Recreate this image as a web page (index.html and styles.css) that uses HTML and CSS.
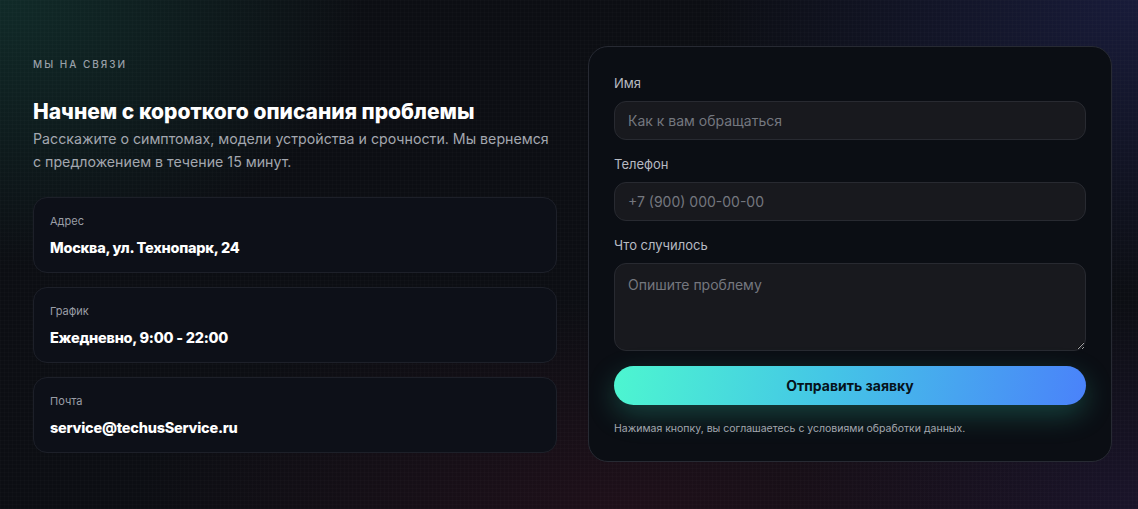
FILE: index.html
```
<!DOCTYPE html>
<html lang="ru">
<head>
<meta charset="utf-8">
<title>Контакты</title>
<link rel="stylesheet" href="styles.css">
</head>
<body>
<section class="contact">
  <div class="info">
    <div class="eyebrow">МЫ НА СВЯЗИ</div>
    <h2 class="title">Начнем с короткого описания проблемы</h2>
    <p class="lead">Расскажите о симптомах, модели устройства и срочности. Мы вернемся с предложением в течение 15 минут.</p>
    <div class="cards">
      <div class="card">
        <div class="card-label">Адрес</div>
        <div class="card-value">Москва, ул. Технопарк, 24</div>
      </div>
      <div class="card">
        <div class="card-label">График</div>
        <div class="card-value">Ежедневно, 9:00 - 22:00</div>
      </div>
      <div class="card">
        <div class="card-label">Почта</div>
        <div class="card-value">service@techusService.ru</div>
      </div>
    </div>
  </div>
  <form class="form">
    <label class="field">
      <span class="field-label">Имя</span>
      <input class="input" type="text" placeholder="Как к вам обращаться">
    </label>
    <label class="field">
      <span class="field-label">Телефон</span>
      <input class="input" type="tel" placeholder="+7 (900) 000-00-00">
    </label>
    <label class="field">
      <span class="field-label">Что случилось</span>
      <textarea class="input textarea" placeholder="Опишите проблему"></textarea>
    </label>
    <button class="submit" type="button">Отправить заявку</button>
    <p class="note">Нажимая кнопку, вы соглашаетесь с условиями обработки данных.</p>
  </form>
</section>
</body>
</html>
```
FILE: styles.css
```
* { box-sizing: border-box; }
html, body { height: 100%; }
body {
  margin: 0;
  font-family: Inter, "Noto Sans", sans-serif;
  color: #f3f4f6;
  background-color: #0c0e13;
  background-image:
    linear-gradient(rgba(255,255,255,0.012) 1px, transparent 1px),
    linear-gradient(90deg, rgba(255,255,255,0.012) 1px, transparent 1px),
    radial-gradient(ellipse 520px 380px at 0% 0%, rgba(20,66,58,0.55), transparent 70%),
    radial-gradient(ellipse 620px 420px at 100% 0%, rgba(36,40,96,0.5), transparent 70%),
    radial-gradient(ellipse 700px 300px at 55% 100%, rgba(70,20,40,0.32), transparent 70%),
    radial-gradient(ellipse 500px 300px at 100% 100%, rgba(50,30,80,0.38), transparent 70%);
  background-size: 4px 4px, 4px 4px, auto, auto, auto, auto;
}
.contact {
  display: grid;
  grid-template-columns: 524px 524px;
  column-gap: 31px;
  padding: 46px 0 0 33px;
  align-items: start;
}
.info { padding-top: 11px; }
.eyebrow {
  font-size: 10px;
  letter-spacing: 2px;
  color: #9aa0a9;
  line-height: 14px;
  font-weight: 500;
}
.title {
  margin: 27px 0 0;
  font-size: 21px;
  line-height: 28px;
  font-weight: 800;
  color: #ffffff;
  letter-spacing: 0;
}
.lead {
  margin: 1px 0 0;
  font-size: 14.2px;
  line-height: 23px;
  color: #a3a7af;
}
.cards {
  margin-top: 24px;
  display: flex;
  flex-direction: column;
  gap: 14px;
}
.card {
  height: 76px;
  border: 1px solid #1d2029;
  border-radius: 14px;
  background: #0d1018;
  padding: 15px 16px 0;
}
.card-label {
  font-size: 11px;
  line-height: 16px;
  color: #9a9ea6;
}
.card-value {
  margin-top: 9px;
  font-size: 14.5px;
  line-height: 20px;
  font-weight: 800;
  color: #ffffff;
  letter-spacing: -0.25px;
}
.form {
  margin: 0;
  height: 416px;
  border: 1px solid #272a33;
  border-radius: 20px;
  background: #0b0e14;
  padding: 27px 25px 0;
  display: flex;
  flex-direction: column;
}
.field {
  display: flex;
  flex-direction: column;
  margin-bottom: 15px;
}
.field-label {
  font-size: 13px;
  line-height: 18px;
  color: #b7bac2;
  margin-bottom: 9px;
}
.input {
  height: 39px;
  border: 1px solid #282a31;
  border-radius: 12px;
  background: #18191e;
  color: #e5e7eb;
  font-family: inherit;
  font-size: 14px;
  padding: 0 13px;
  outline: none;
}
.input::placeholder { color: #74777e; }
.textarea {
  height: 88px;
  padding: 11px 13px;
  resize: vertical;
  line-height: 20px;
}
.field:last-of-type { margin-bottom: 15px; }
.submit {
  height: 39px;
  border: 0;
  border-radius: 20px;
  background: linear-gradient(100deg, #4df6d0 0%, #44c6e6 45%, #4a82fa 100%);
  color: #06121a;
  font-family: inherit;
  font-size: 14px;
  font-weight: 700;
  box-shadow: 0 10px 28px rgba(50, 200, 170, 0.28);
  cursor: pointer;
}
.note {
  margin: 16px 0 0;
  font-size: 10.5px;
  line-height: 16px;
  color: #a3a7af;
}
```
